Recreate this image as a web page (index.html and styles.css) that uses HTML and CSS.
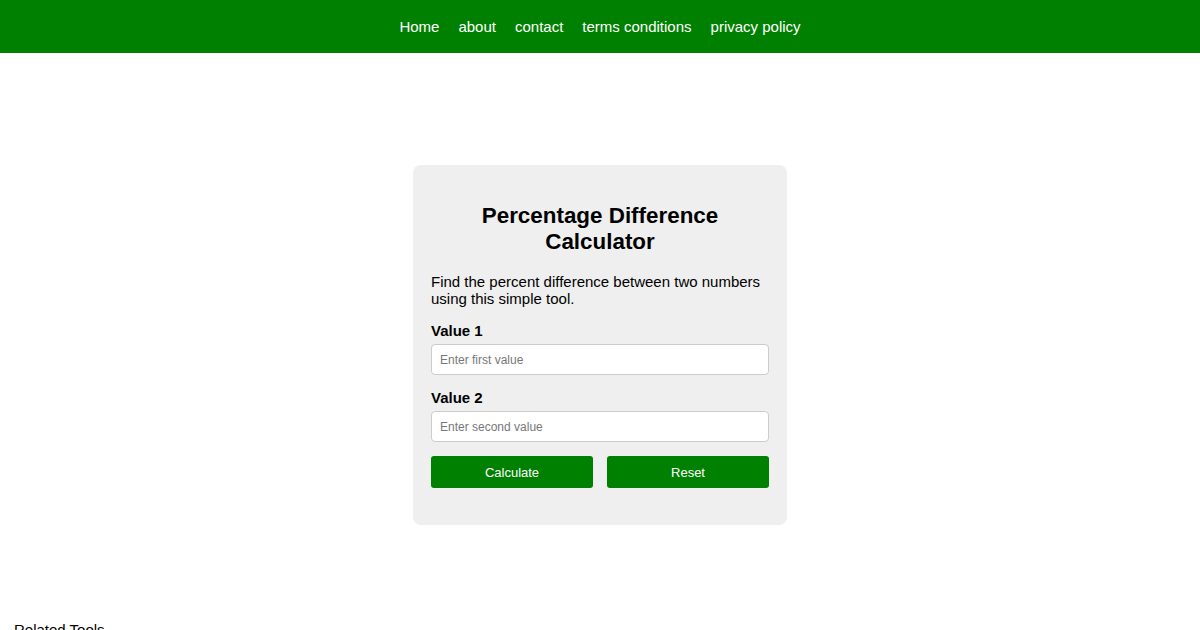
FILE: index.html
```html
<!DOCTYPE html>
<html>
<head>
<meta charset="utf-8">
<link rel="stylesheet" href="styles.css">
</head>
<body>
<header class="topbar">
  <nav class="nav">
    <a href="#">Home</a>
    <a href="#">about</a>
    <a href="#">contact</a>
    <a href="#">terms conditions</a>
    <a href="#">privacy policy</a>
  </nav>
</header>
<main class="main">
  <div class="card">
    <h2 class="title">Percentage Difference Calculator</h2>
    <p class="desc">Find the percent difference between two numbers using this simple tool.</p>
    <label class="label">Value 1</label>
    <input class="field" type="text" placeholder="Enter first value">
    <label class="label">Value 2</label>
    <input class="field" type="text" placeholder="Enter second value">
    <div class="buttons">
      <button class="btn">Calculate</button>
      <button class="btn">Reset</button>
    </div>
  </div>
</main>
<section class="related">
  <h3 class="related-title">Related Tools</h3>
</section>
</body>
</html>
```
FILE: styles.css
```css
* { box-sizing: border-box; }
body {
  margin: 0;
  font-family: "Liberation Sans", Arial, sans-serif;
  color: #000;
  background: #fff;
}
.topbar {
  background: #008000;
  height: 53px;
  display: flex;
  align-items: center;
  justify-content: center;
}
.nav {
  display: flex;
  gap: 19px;
  padding-bottom: 1px;
}
.nav a {
  color: #fff;
  text-decoration: none;
  font-size: 15px;
}
.main {
  display: flex;
  justify-content: center;
  padding-top: 112px;
}
.card {
  width: 374px;
  background: #efefef;
  border-radius: 8px;
  padding: 18px 18px 37px;
  display: flex;
  flex-direction: column;
}
.title {
  font-size: 22.4px;
  line-height: 26px;
  text-align: center;
  margin: 20px 0 18px;
  font-weight: bold;
}
.desc {
  font-size: 15px;
  line-height: 17px;
  margin: 0 0 15px;
}
.label {
  font-weight: bold;
  font-size: 15px;
  line-height: 17px;
  margin-bottom: 5px;
}
.field {
  height: 31px;
  border: 1px solid #ccc;
  border-radius: 4px;
  padding: 0 8px;
  font-family: "Liberation Sans", Arial, sans-serif;
  font-size: 12px;
  margin-bottom: 14px;
  background: #fff;
}
.field::placeholder { color: #777; }
.buttons {
  display: flex;
  gap: 14px;
}
.btn {
  flex: 1;
  height: 32px;
  background: #008000;
  color: #fff;
  border: none;
  border-radius: 3px;
  font-family: "Liberation Sans", Arial, sans-serif;
  font-size: 13px;
}
.related {
  padding: 0 14px;
  margin-top: 96px;
}
.related-title {
  font-size: 15px;
  font-weight: normal;
  margin: 0;
}
```
